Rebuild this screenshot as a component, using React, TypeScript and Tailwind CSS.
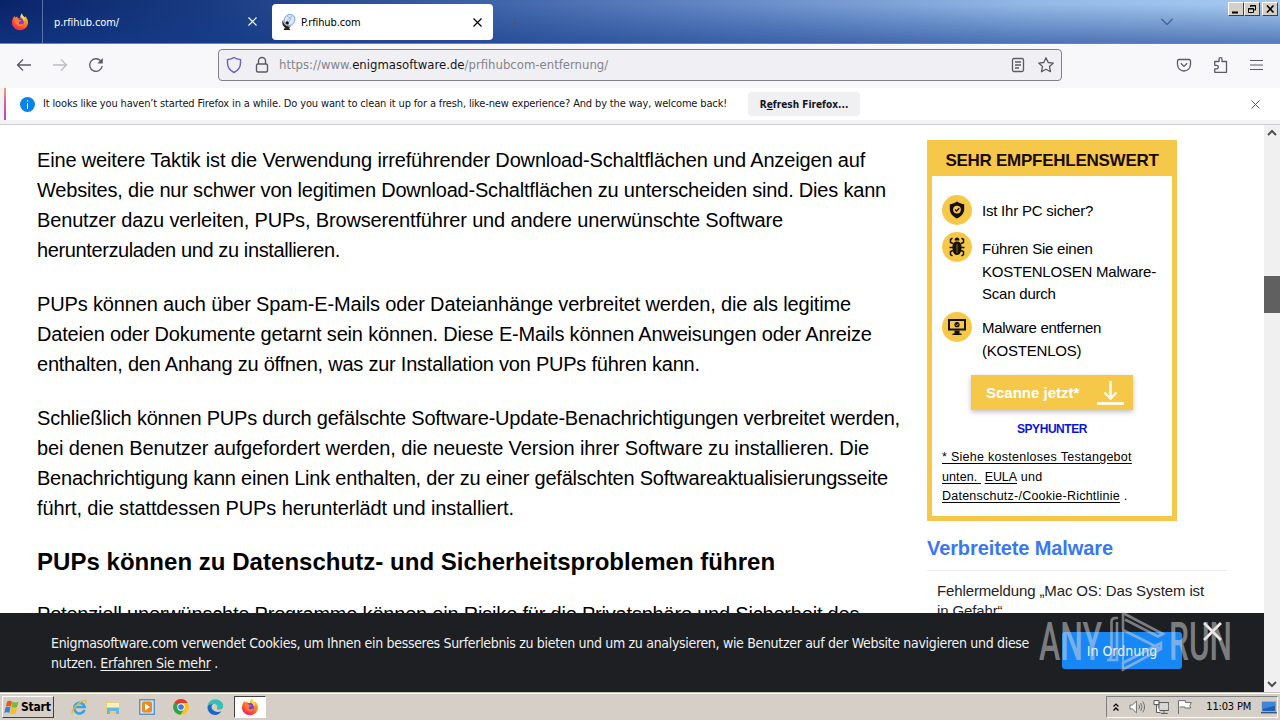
import React from 'react';
import { clsx } from 'clsx';

type Line = { text: string; tracking: string };

const paragraphs: Line[][] = [
  [
    { text: 'Eine weitere Taktik ist die Verwendung irreführender Download-Schaltflächen und Anzeigen auf', tracking: 'tracking-[-0.155px]' },
    { text: 'Websites, die nur schwer von legitimen Download-Schaltflächen zu unterscheiden sind. Dies kann', tracking: 'tracking-[-0.201px]' },
    { text: 'Benutzer dazu verleiten, PUPs, Browserentführer und andere unerwünschte Software', tracking: 'tracking-[-0.152px]' },
    { text: 'herunterzuladen und zu installieren.', tracking: 'tracking-[-0.385px]' },
  ],
  [
    { text: 'PUPs können auch über Spam-E-Mails oder Dateianhänge verbreitet werden, die als legitime', tracking: 'tracking-[-0.149px]' },
    { text: 'Dateien oder Dokumente getarnt sein können. Diese E-Mails können Anweisungen oder Anreize', tracking: 'tracking-[-0.19px]' },
    { text: 'enthalten, den Anhang zu öffnen, was zur Installation von PUPs führen kann.', tracking: 'tracking-[-0.23px]' },
  ],
  [
    { text: 'Schließlich können PUPs durch gefälschte Software-Update-Benachrichtigungen verbreitet werden,', tracking: 'tracking-[-0.198px]' },
    { text: 'bei denen Benutzer aufgefordert werden, die neueste Version ihrer Software zu installieren. Die', tracking: 'tracking-[-0.125px]' },
    { text: 'Benachrichtigung kann einen Link enthalten, der zu einer gefälschten Softwareaktualisierungsseite', tracking: 'tracking-[-0.225px]' },
    { text: 'führt, die stattdessen PUPs herunterlädt und installiert.', tracking: 'tracking-[-0.116px]' },
  ],
];

const FirefoxIcon: React.FC = () => (
  <svg width="18" height="18" viewBox="0 0 18 18">
    <defs>
      <linearGradient id="fx-flame" x1="0.85" y1="0" x2="0.2" y2="1">
        <stop offset="0" stopColor="#ffe23a" />
        <stop offset="0.4" stopColor="#ff8a1e" />
        <stop offset="0.75" stopColor="#ff3d3d" />
        <stop offset="1" stopColor="#e0218a" />
      </linearGradient>
    </defs>
    <path d="M2 5.2 3.4 3l.8 1.6 2-1.2.3 1.4 2.8.4C9 3 9.800 1.600 11 .6c.2 1.900 1.400 2.600 2.600 3.800l.4-1.200c2 1.600 3.200 4 3 6.600-.3 4.200-3.800 7.400-8 7.400S1 13.900 1 9.700C1 8 1.300 6.500 2 5.200z" fill="url(#fx-flame)" />
    <circle cx="9" cy="9" r="3.900" fill="#7a3fe0" />
    <path d="M3.500 6.200c1.800-.9 3.700-.5 4.800.7l2 .4c-.3 1-1.600 1.200-2.300 1.600-.6.7-.3 2.100 1.200 2.400 1.300.2 2.200-.7 3.400-.4-.9 1.900-2.700 2.700-4.700 2.300-2.800-.6-4.700-3.500-4.400-7z" fill="#ff7a2c" />
    <path d="M11 .6c-1.200 1.400-1.200 3.200-.2 4.400 1 1 1.900 2 1.900 3.400 1.300-1.600 1.400-3.100.9-4C12.400 3.200 11.200 2.500 11 .6z" fill="#ffd83c" />
  </svg>
);

const CloseIcon: React.FC<{ size?: number; width?: number }> = ({ size = 9, width = 1.2 }) => (
  <svg width={size} height={size} viewBox="0 0 9 9" fill="none" stroke="currentColor" strokeWidth={width}>
    <path d="M.5.5l8 8M8.500.5l-8 8" />
  </svg>
);

const SatelliteIcon: React.FC = () => (
  <svg width="16" height="16" viewBox="0 0 16 16">
    <ellipse cx="8.500" cy="6" rx="5.200" ry="5.800" transform="rotate(40 8.500 6)" fill="#dbe8f8" stroke="#6a9be0" strokeWidth="0.900" />
    <path d="M6 2l4 2.500L8 8M11 2L6 6.500" stroke="#7ba3e0" strokeWidth="0.700" fill="none" />
    <path d="M2 6c0 4 3.500 7 8 6.500L8 14l1.500 2h-7l1.500-2.500C1.500 12 .5 8.500 2 6z" fill="#222" />
    <circle cx="6.200" cy="9" r="1.700" fill="#111" />
    <path d="M3 6.500c.3 2.500 1.800 4 4 4.800" stroke="#9aa" strokeWidth="1" fill="none" />
  </svg>
);

const WindowButton: React.FC<{ children: React.ReactNode }> = ({ children }) => (
  <div className="h-[14px] w-4 border border-t-white border-r-[#404040] border-b-[#404040] border-l-white bg-[#d4d0c8]">
    <svg width="14" height="12" viewBox="0 0 14 12" fill="none" stroke="#000">
      {children}
    </svg>
  </div>
);

const TabBar: React.FC = () => (
  <div className="flex h-11 shrink-0 border-b border-[#76819c] bg-[linear-gradient(to_bottom,transparent_10%,rgba(20,60,140,0.55)),linear-gradient(to_right,#0a246a_0%,#17397f_15%,#3f63a8_38%,#6f93cc_62%,#92b8e6_80%,#a6caf0_100%)]">
    <div className="flex w-[43px] items-center justify-center border-r border-[#8da0cc]/60 pr-[3px]">
      <FirefoxIcon />
    </div>
    <div className="flex w-[229px] items-center justify-between pr-[15px] pl-[11px] text-[11px] text-white">
      <span className="pt-[3px] tracking-[-0.09px]">p.rfihub.com/</span>
      <CloseIcon />
    </div>
    <div className="mt-1 flex h-9 w-[221px] items-center rounded bg-white pr-[11px] pl-[9px] text-[11px] text-black">
      <SatelliteIcon />
      <span className="ml-1 flex-1 pt-[3px] tracking-[-0.1px]">P.rfihub.com</span>
      <CloseIcon />
    </div>
    <svg className="mt-[18px] ml-[17px]" width="10" height="10" viewBox="0 0 10 10" stroke="#4a5872" strokeWidth="1.200">
      <path d="M5 0v10M0 5h10" />
    </svg>
    <svg className="mt-[17px] ml-auto" width="14" height="10" viewBox="0 0 14 10" fill="none" stroke="#4a6594" strokeWidth="1.500">
      <path d="M1.500 2 7 7.500 12.500 2" />
    </svg>
    <div className="mt-0.5 ml-[54px] flex h-[14px]">
      <WindowButton>
        <path d="M3 9.500h6" strokeWidth="2" />
      </WindowButton>
      <WindowButton>
        <path d="M5.500 4V2.500h5V7H9M5 3h6" />
        <path d="M3.500 5.500h5v4h-5zM3 6h6" />
      </WindowButton>
      <div className="w-0.5" />
      <WindowButton>
        <path d="M4 2.500l6.500 7M10.500 2.500l-6.500 7" strokeWidth="1.600" />
      </WindowButton>
    </div>
    <div className="w-0.5" />
  </div>
);

const NavBar: React.FC = () => (
  <div className="flex h-11 shrink-0 items-center bg-[#f8f8fb] pb-[3px] text-[#5b5b66]">
    <svg className="ml-4" width="16" height="16" viewBox="0 0 16 16" fill="none" stroke="currentColor" strokeWidth="1.300">
      <path d="M15 8H1.500M7 2.500 1.500 8 7 13.500" />
    </svg>
    <svg className="ml-5" width="16" height="16" viewBox="0 0 16 16" fill="none" stroke="#bcbcc2" strokeWidth="1.300">
      <path d="M1 8h13.500M9 2.500 14.500 8 9 13.500" />
    </svg>
    <svg className="ml-5" width="16" height="16" viewBox="0 0 16 16" fill="none" stroke="currentColor" strokeWidth="1.300">
      <path d="M14.200 9A6.300 6.300 0 1 1 12.800 4" />
      <path d="M14.800 1v5.500H9.300z" fill="currentColor" stroke="none" />
    </svg>
    <div className="ml-[114px] flex h-8 w-[844px] items-center rounded border border-[#808087] bg-[#f0f0f4]">
      <svg className="ml-[7px]" width="16" height="18" viewBox="0 0 16 18" fill="none" stroke="#6a5fc4" strokeWidth="1.400">
        <path d="M8 1.500C6 2.800 4 3.300 1.500 3.600V7c0 4.500 2.500 7.500 6.500 9.500 4-2 6.500-5 6.500-9.500V3.600C12 3.300 10 2.800 8 1.500z" />
      </svg>
      <svg className="ml-3" width="16" height="18" viewBox="0 0 16 18" fill="none" stroke="currentColor" strokeWidth="1.400">
        <rect x="2.500" y="8" width="11" height="8" rx="1.500" />
        <path d="M4.500 8V5a3.500 3.500 0 0 1 7 0v3" />
      </svg>
      <span className="ml-[9px] text-[13px] text-[#84848c]">
        https://www.<span className="text-[#15141a]">enigmasoftware.de</span>/prfihubcom-entfernung/
      </span>
      <svg className="ml-auto" width="14" height="16" viewBox="0 0 14 16" fill="none" stroke="currentColor" strokeWidth="1.300">
        <rect x="1.500" y="1.500" width="11" height="13" rx="1.500" />
        <path d="M4 5h6M4 8h6M4 11h4" />
      </svg>
      <svg className="mr-[6px] ml-3" width="18" height="18" viewBox="0 0 18 18" fill="none" stroke="currentColor" strokeWidth="1.300" strokeLinejoin="round">
        <path d="M9 1.800l2.200 4.700 5.100.6-3.800 3.500 1 5.100L9 13.200l-4.500 2.500 1-5.100L1.700 7.100l5.100-.6z" />
      </svg>
    </div>
    <svg className="ml-[114px]" width="16" height="16" viewBox="0 0 16 16" fill="none" stroke="currentColor" strokeWidth="1.300">
      <path d="M3 2.500h10c.9 0 1.500.6 1.500 1.500v3.500a6.500 6.500 0 0 1-13 0V4c0-.9.600-1.500 1.500-1.500z" />
      <path d="M4.800 6.300 8 9.400l3.200-3.100" />
    </svg>
    <svg className="ml-5" width="18" height="18" viewBox="0 0 18 18" fill="none" stroke="currentColor" strokeWidth="1.300" strokeLinejoin="round">
      <path d="M7 5.500V3.200a1.500 1.500 0 0 1 3 0v2.300h4.500v10.800H2.700v-3.500h1.900a1.700 1.700 0 0 0 0-3.500H2.700V5.500z" />
    </svg>
    <svg className="mr-[17px] ml-auto" width="13" height="12" viewBox="0 0 13 12" stroke="currentColor" strokeWidth="1.200">
      <path d="M0 1.500h13M0 6h13M0 10.500h13" />
    </svg>
  </div>
);

const NotificationBar: React.FC = () => (
  <div className="h-[37px] shrink-0 border-b border-[#cfcfd2] bg-[#f3f3f5] pl-1">
    <div className="flex h-8 items-center bg-white pr-5">
      <div className="h-8 w-0.5 bg-[linear-gradient(to_bottom,#f0a06c,#e8559a,#9a4fd0)]" />
      <div className="ml-[14px] flex h-[15px] w-[15px] items-center justify-center rounded-full bg-[#0a84e8]">
        <svg width="3" height="9" viewBox="0 0 3 9" fill="#fff">
          <path d="M1 0h1v1.500H1zM1 3h1v6H1z" />
        </svg>
      </div>
      <span className="ml-2 text-[11px] tracking-[-0.148px] whitespace-nowrap text-[#15141a]">
        It looks like you haven’t started Firefox in a while. Do you want to clean it up for a fresh, like-new experience? And by the way, welcome back!
      </span>
      <button className="ml-[21px] h-6 w-28 rounded bg-[#f0f0f2] text-[10px] font-bold tracking-[0.02px] whitespace-nowrap text-[#15141a]">
        R<span className="underline">e</span>fresh Firefox...
      </button>
      <div className="ml-auto text-[#5b5b66]">
        <CloseIcon width={1} />
      </div>
    </div>
  </div>
);

const Article: React.FC = () => (
  <div className="w-[927px] shrink-0 pt-5 pl-[37px] text-[20px] leading-[30px] whitespace-nowrap">
    {paragraphs.map((lines) => (
      <p key={lines[0].text} className="mb-6">
        {lines.map((line) => (
          <span key={line.text} className={clsx('block', line.tracking)}>
            {line.text}
          </span>
        ))}
      </p>
    ))}
    <h2 className="mb-[22px] text-[24px] font-bold tracking-[0.035px]">
      PUPs können zu Datenschutz- und Sicherheitsproblemen führen
    </h2>
    <p className="tracking-[-0.2px]">
      Potenziell unerwünschte Programme können ein Risiko für die Privatsphäre und Sicherheit des
    </p>
  </div>
);

const Badge: React.FC<{ children: React.ReactNode }> = ({ children }) => (
  <div className="flex h-[30px] w-[30px] shrink-0 items-center justify-center rounded-full bg-[#f6c84a]">
    {children}
  </div>
);

const Sidebar: React.FC = () => (
  <div className="w-[300px] pt-[15px] whitespace-nowrap">
    <div className="h-[381px] w-[250px] border-[5px] border-t-0 border-[#f6c84a]">
      <div className="h-9 bg-[#f6c84a] pt-0.5 text-center text-[17px] leading-[38px] font-bold tracking-[-0.26px] text-[#1a0a05]">
        SEHR EMPFEHLENSWERT
      </div>
      <ul className="px-[10px] pt-[19px] text-[15px] leading-[22.5px] tracking-[-0.22px]">
        <li className="flex h-[37px] gap-[10px]">
          <Badge>
            <svg width="18" height="20" viewBox="0 0 20 20">
              <path d="M10 .5c2.400 1.800 5 2.700 8 3v5.500c0 5-3.500 8.500-8 10.500-4.500-2-8-5.500-8-10.500V3.500c3-.3 5.600-1.200 8-3z" fill="#161004" />
              <circle cx="10" cy="9.500" r="4.300" fill="#f6c84a" />
              <path d="M7.800 9.500l1.700 1.700 3-3.200" stroke="#161004" strokeWidth="1.500" fill="none" />
            </svg>
          </Badge>
          <span className="pt-[5px]">Ist Ihr PC sicher?</span>
        </li>
        <li className="flex h-20 gap-[10px]">
          <Badge>
            <svg width="16" height="20" viewBox="0 0 16 20" stroke="#161004" fill="none" strokeWidth="1.500">
              <path d="M5.500 3.500C5.500 1.500 6.800.5 8 .5s2.500 1 2.500 3zM8 4.500c3.600 0 4.500 2.500 4.500 6 0 4-1.500 7.500-4.500 7.500s-4.500-3.500-4.500-7.500c0-3.500.9-6 4.500-6z" fill="#161004" stroke="none" />
              <path d="M4 6.500 1.500 5.500V2.500l2-1.300M12 6.500l2.500-1V2.500l-2-1.300M4 10.500H.5M12 10.500h3.500M4 13.500l-2.500 1v3l2 1.500M12 13.500l2.500 1v3l-2 1.500" />
              <path d="M8 7v9" stroke="#8a6a20" strokeWidth="1" />
            </svg>
          </Badge>
          <span className="pt-[6px]">
            Führen Sie einen
            <br />
            KOSTENLOSEN Malware-
            <br />
            Scan durch
          </span>
        </li>
        <li className="flex h-[63px] gap-[10px]">
          <Badge>
            <svg width="20" height="18" viewBox="0 0 20 18" stroke="#161004" fill="none">
              <path d="M2 2h16v9.500H2z" strokeWidth="2" />
              <path d="M7.500 12.500h5v3h2V17h-9v-1.500h2z" fill="#161004" stroke="none" />
              <circle cx="10" cy="6.700" r="2.600" fill="#161004" stroke="none" />
              <path d="M8.800 6.700l1 1 1.700-1.900" stroke="#f6c84a" strokeWidth="0.900" />
            </svg>
          </Badge>
          <span className="pt-[5px]">
            <span className="tracking-[-0.308px]">Malware entfernen</span>
            <br />
            (KOSTENLOS)
          </span>
        </li>
      </ul>
      <button className="ml-[39px] flex h-[35px] w-[162px] items-center justify-between bg-[#f6c84a] pr-[9px] pl-[15px] text-[15px] font-bold text-white shadow-[0_2px_5px_rgba(0,0,0,0.25)]">
        <span className="pt-0.5">Scanne jetzt*</span>
        <svg width="27" height="24" viewBox="0 0 27 24" fill="none" stroke="#fff">
          <path d="M13.500 0v17M7.500 11.500l6 6 6-6" strokeWidth="2.400" />
          <path d="M0 22.500h27" strokeWidth="2.600" />
        </svg>
      </button>
      <div className="pt-[9px] text-center text-[12px] leading-[20px] font-bold tracking-[-0.446px] text-[#0a14d8]">
        SPYHUNTER
      </div>
      <p className="px-[10px] pt-[9px] text-[12.5px] leading-[19.500px] tracking-[0.28px]">
        <span className="underline underline-offset-2">* Siehe kostenloses Testangebot</span>
        <br />
        <span className="tracking-[0.1px] underline underline-offset-2">unten.&nbsp;</span>{' '}
        <span className="tracking-[-0.1px] underline underline-offset-2">EULA</span> und
        <br />
        <span className="tracking-[0.235px] underline underline-offset-2">Datenschutz-/Cookie-Richtlinie</span> .
      </p>
    </div>
    <h3 className="h-[50px] border-b border-[#ececee] pt-[13px] text-[20px] leading-[28px] font-bold tracking-[-0.098px] text-[#3a78ee]">
      Verbreitete Malware
    </h3>
    <p className="pt-[10px] pl-[10px] text-[15px] leading-[19.500px] tracking-[-0.128px] text-[#222]">
      Fehlermeldung „Mac OS: Das System ist
      <br />
      in Gefahr“
    </p>
  </div>
);

const Scrollbar: React.FC = () => (
  <div className="flex w-4 shrink-0 flex-col items-center bg-[#f0f0f0] text-[#505050]">
    <svg className="mt-1" width="10" height="8" viewBox="0 0 10 8" fill="none" stroke="currentColor" strokeWidth="2">
      <path d="M1 6l4-4 4 4" />
    </svg>
    <div className="mt-[139px] h-[37px] w-4 bg-[#606060]" />
    <svg className="mt-auto mb-1" width="10" height="8" viewBox="0 0 10 8" fill="none" stroke="currentColor" strokeWidth="2">
      <path d="M1 2l4 4 4-4" />
    </svg>
  </div>
);

const CookieBanner: React.FC = () => (
  <div className="absolute bottom-0 left-0 flex h-[79px] w-[1264px] bg-[#1d1f23] font-['DejaVu_Sans_Condensed','DejaVu_Sans',sans-serif] text-[14px] text-[#f2f2f2]">
    <p className="w-[1011px] pt-5 pl-[51px] leading-5 tracking-[-0.316px] whitespace-nowrap">
      Enigmasoftware.com verwendet Cookies, um Ihnen ein besseres Surferlebnis zu bieten und um zu analysieren, wie Benutzer auf der Website navigieren und diese
      <br />
      <span className="tracking-[-0.24px]">
        nutzen. <span className="underline underline-offset-2">Erfahren Sie mehr</span> .
      </span>
    </p>
    <button className="mt-[19px] ml-[51px] h-[37px] w-[120px] rounded-[3px] bg-[#1787f5] pt-0.5">In Ordnung</button>
    <div className="mt-[9px] ml-[21px]">
      <CloseIcon size={19} width={1.300} />
    </div>
  </div>
);

// Semi-transparent logo laid over the bottom right corner of the page
const Watermark: React.FC = () => (
  <svg className="absolute top-[610px] left-[1038px] opacity-50" width="196" height="64" viewBox="0 0 196 64">
    <g fill="#d8d8d8" fontFamily="Roboto, 'Liberation Sans', sans-serif" fontSize="53" fontWeight="500">
      <text x="1" y="50" textLength="63" lengthAdjust="spacingAndGlyphs">ANY</text>
      <text x="131" y="50" textLength="63" lengthAdjust="spacingAndGlyphs">RUN</text>
    </g>
    <g fill="none" stroke="#d8d8d8" strokeWidth="2.600">
      <path d="M80 8h-2.500q-4 0-4 4v33q0 5-4.500 5h10V12" />
      <path d="M85 20V3l40 21-5 2.500-33-17" />
      <path d="M85 20l38 19" />
      <path d="M85 53l38-20v6l-38 20.500z" />
      <path d="M85 20v34" strokeWidth="2" />
    </g>
  </svg>
);

const StartFlag: React.FC = () => (
  <svg width="16" height="15" viewBox="0 0 16 15">
    <path d="M3 1.500C5 .3 6.500.6 8 1.600L6.800 6.800c-1.500-1-3.200-1-5 0z" fill="#e8562a" />
    <path d="M8.500 1.800c2 1 4 1 6-.2l-1.300 5.400c-1.900 1-3.700 1-5.800-.1z" fill="#7cb83c" />
    <path d="M1.500 7.500c1.800-1 3.500-1 5-.1l-1.200 5.600c-1.500-1-3.200-1-5 .1z" fill="#3a7fd8" />
    <path d="M7 7.600c2 1 4.200 1 6 0l-1.200 5.800c-2 1.100-3.900 1-5.800-.1z" fill="#f5bf2c" />
  </svg>
);

const Taskbar: React.FC = () => (
  <div className="flex h-7 shrink-0 items-center border-t border-[#c6c9b8] bg-[#d6cfc7] shadow-[inset_0_1px_0_#fff]">
    <div className="mt-[1px] ml-0.5 flex h-[22px] w-[52px] items-center gap-px border border-t-white border-r-[#404040] border-b-[#404040] border-l-white pl-px text-[12px] font-bold text-black">
      <StartFlag />
      <span className="tracking-[-0.2px]">Start</span>
    </div>
    <div className="mt-[1px] ml-[17px] flex items-center gap-[18px]">
      <svg width="16" height="16" viewBox="0 0 16 16" fill="none">
        <path d="M13.500 11A5.300 5.300 0 1 1 13.700 8H4" stroke="#3ba3e0" strokeWidth="2.600" />
        <path d="M1.500 14.500C-.5 12 6 4 13 1.500c2.500-.8 2.500 1 1.500 3" stroke="#e9b93a" strokeWidth="1.300" />
      </svg>
      <svg width="16" height="16" viewBox="0 0 16 16">
        <path d="M1 2h6l1 1.500h6V14H1z" fill="#e9cf74" />
        <path d="M2 4h12v4H2z" fill="#f9f0be" />
        <path d="M2 9h12v6h-3v-3H5v3H2z" fill="#69b5dc" />
      </svg>
      <svg width="16" height="16" viewBox="0 0 16 16">
        <rect x="0.700" y="0.700" width="14.600" height="14.600" fill="#cfe3f4" stroke="#5795c8" strokeWidth="1.400" />
        <rect x="3" y="2.500" width="10" height="11" rx="2" fill="#ee8b1c" />
        <path d="M6 4.500 11 8l-5 3.500z" fill="#fff" />
      </svg>
      <svg width="16" height="16" viewBox="0 0 16 16">
        <circle cx="8" cy="8" r="7.800" fill="#fbc116" />
        <path d="M8 8 1.200 4.100A7.800 7.800 0 0 1 14.800 4.100H8z" fill="#e33b2e" />
        <path d="M8 8 1.200 4.100A7.800 7.800 0 0 0 7.500 15.800L11 10z" fill="#2fa24c" />
        <circle cx="8" cy="8" r="3.700" fill="#fff" />
        <circle cx="8" cy="8" r="2.800" fill="#3b7de8" />
      </svg>
      <svg width="17" height="16" viewBox="0 0 17 16">
        <path d="M.5 8C.5 3.500 4 .2 8.300.2c4.500 0 7.900 3 7.900 6.500 0 2.500-2 4-4.200 4-1.700 0-2.500-.7-2-1.500C11 7 9.500 5 6.500 5 3.500 5 1 6.500.5 8z" fill="#35c1b4" />
        <path d="M.5 8C1 6.300 3.500 5 6 5c-2 1.500-2 4 0 6 2 2 5 2.500 8.500 1.300C13 14.600 10.800 16 8.200 16 4 16 .3 12.500.5 8z" fill="#1769c4" />
      </svg>
    </div>
    <div className="mt-[1px] ml-[10px] flex h-[22px] w-8 items-center justify-center border border-t-[#404040] border-r-white border-b-white border-l-[#404040] bg-white">
      <FirefoxIcon />
    </div>
    <div className="mt-[1px] mr-0.5 ml-auto flex h-[22px] w-[172px] items-center border border-t-[#808080] border-r-white border-b-white border-l-[#808080] text-[11px] text-black">
      <svg className="ml-[6px]" width="6" height="9" viewBox="0 0 6 9" fill="none" stroke="#000" strokeWidth="1.300">
        <path d="M.5 3.500 3 1l2.500 2.500M.5 7.500 3 5l2.500 2.500" />
      </svg>
      <svg className="ml-[10px]" width="17" height="14" viewBox="0 0 17 14" fill="#fff" stroke="#6e6e6e">
        <path d="M1 5h2.500L7.500 1v12L3.500 9H1z" />
        <path d="M10 4.500q1.500 2.500 0 5M12 3q2.500 4 0 8M14 1.500q3.500 5.500 0 11" fill="none" />
      </svg>
      <svg className="ml-[7px]" width="17" height="16" viewBox="0 0 17 16" fill="#fff" stroke="#555">
        <path d="M6 3.500h10v8H6z" fill="#d8d8d8" />
        <path d="M1 1.500h5v4H1zM3.500 5.500v8h4M8 14.500h7M11 12v2" />
      </svg>
      <svg className="ml-2" width="16" height="16" viewBox="0 0 16 16" fill="#fff" stroke="#6e6e6e">
        <path d="M1.500 15V1.500h7v2h6l-1.500 3 1 2.500H8V8H2.500" />
      </svg>
      <span className="ml-[13px] tracking-[-0.146px] whitespace-nowrap">11:03 PM</span>
      <svg className="ml-[10px]" width="16" height="14" viewBox="0 0 16 14">
        <path d="M1 1.500h14v10H1z" fill="#1d5fb8" stroke="#8fb4dc" />
        <path d="M1.500 2h13v3.500L1.500 9z" fill="#3f86d8" />
        <path d="M0 12h16v1.500H0z" fill="#34577f" />
      </svg>
    </div>
  </div>
);

const App: React.FC = () => {
  return (
    <div className="relative flex h-[720px] w-[1280px] flex-col overflow-hidden bg-white font-['DejaVu_Sans_Condensed','DejaVu_Sans',sans-serif]">
      <TabBar />
      <NavBar />
      <NotificationBar />
      <div className="relative flex h-[567px] shrink-0 justify-between overflow-hidden font-['Liberation_Sans',Arial,sans-serif] text-black">
        <div className="flex">
          <Article />
          <Sidebar />
        </div>
        <Scrollbar />
        <CookieBanner />
      </div>
      <Taskbar />
      <Watermark />
    </div>
  );
};

export default App;
